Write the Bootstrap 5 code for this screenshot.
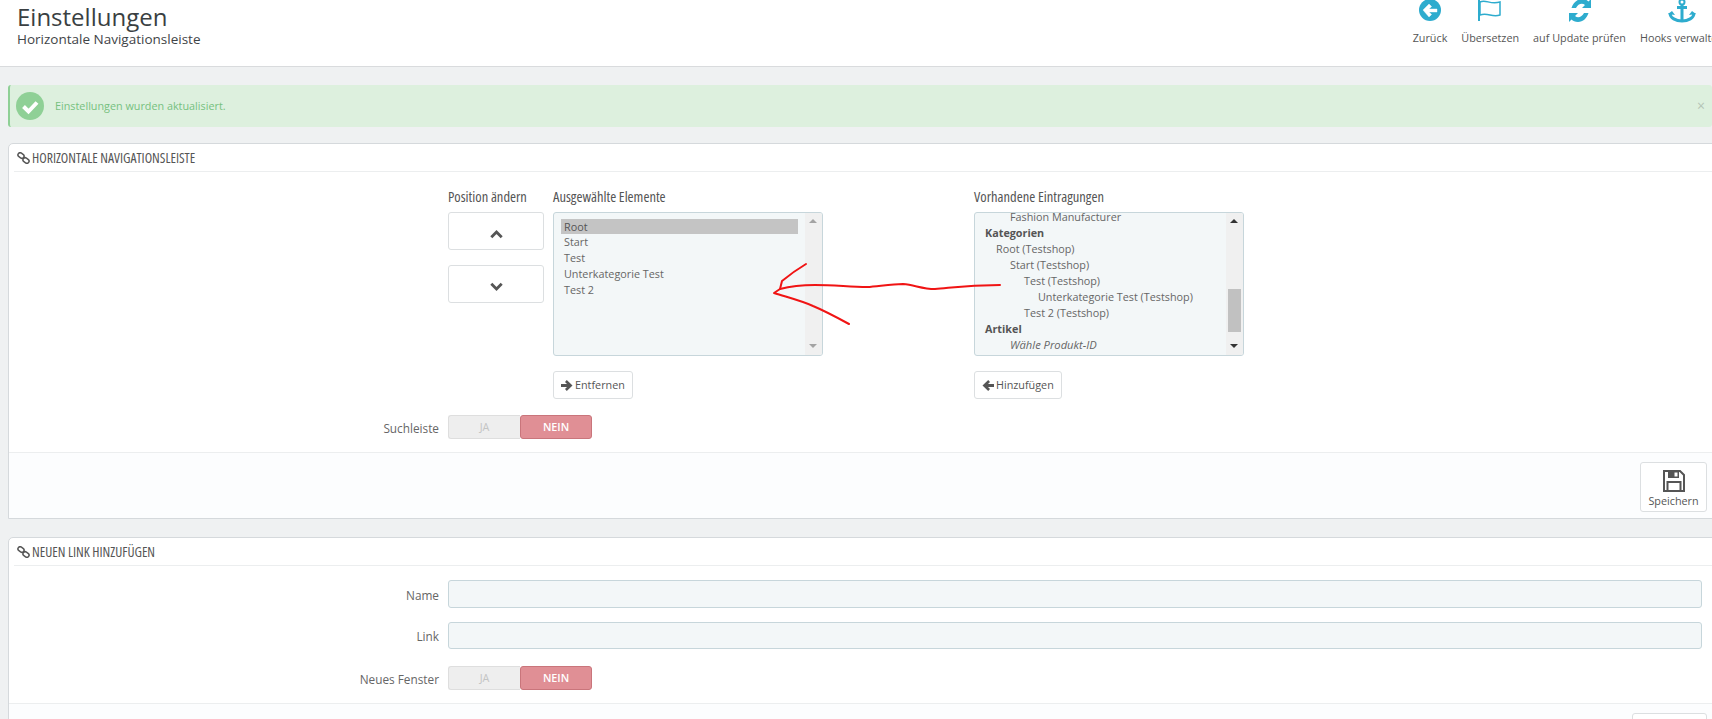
<!DOCTYPE html>
<html lang="de">
<head>
<meta charset="utf-8">
<title>Einstellungen</title>
<link href="https://cdn.jsdelivr.net/npm/bootstrap@5.3.0/dist/css/bootstrap.min.css" rel="stylesheet">
<style>
html,body{height:719px;overflow:hidden}
body{background:#eff1f2;font-family:"Open Sans",sans-serif;font-size:10.8px;color:#666;position:relative}
.pg-head{height:67px;background:#fff;border-bottom:1px solid #d9dbdd;padding-left:17px}
.pg-title{font-size:24px;line-height:26px;color:#3a3f42;padding-top:4px}
.pg-sub{font-size:13.5px;line-height:20px;color:#3f4447;margin-top:-1px}
.tools{margin-right:-12px;gap:14px;font-size:10.8px;color:#555;line-height:15px}
.tool svg{display:block;margin:0 auto;height:23px}
.tool span{display:block;margin-top:7px;white-space:nowrap}
.main-wrap{padding:18px 0 0 8px}
.ok-alert{height:42px;background:#ddf0de;border-left:2px solid #8fd096;border-radius:3px;margin-bottom:16px;color:#76c17f;padding:0 7px 0 6px;gap:11px}
.ok-x{color:#b4c4b6;font-size:14px;line-height:1}
.pn{background:#fff;border:1px solid #d5d9dc;border-radius:5px 5px 0 0;margin-right:-12px;margin-bottom:18px}
.pn-head{height:28px;margin:0 5px;padding-left:3px;border-bottom:1px solid #eceeef;gap:2px;color:#555}
.pn-name{font-size:13.7px;font-stretch:75%;text-transform:uppercase;line-height:1;padding-top:1px}
.cols{padding:18px 0 0 439px;gap:9px}
.col-a{width:96px}
.col-b{width:270px}
.col-c{width:270px;margin-left:142px}
.col-h{height:22px;font-size:14.5px;font-stretch:75%;color:#555;line-height:14px;white-space:nowrap}
.wbtn{display:flex;align-items:center;justify-content:center;background:#fff;border:1px solid #dcdfe1;border-radius:3px;color:#555;padding:0}
.mv{width:96px;height:38px;margin-bottom:15px}
.mv-up{padding-top:6px}
.mv-dn{padding-top:4px}
.lbox{height:144px;background:#f3f7f8;border:1px solid #c7d6db;border-radius:3px;overflow:hidden;line-height:16px;color:#666}
.items{flex:1;padding:6px 7px 0}
.items.scrolled{padding:0;height:142px}
.it{height:16px;padding-left:3px;white-space:nowrap}
.it.sel{background:#c4c4c4;color:#555;height:15px;line-height:16px}
.bar{width:17px;background:#f0f0f0;flex:none;position:relative}
.tri{position:absolute;left:4px;width:0;height:0;border-left:4px solid transparent;border-right:4px solid transparent}
.tri.up{top:6px;border-bottom:4px solid #a3a3a3}
.tri.dn{bottom:7px;border-top:4px solid #a3a3a3}
.tri.up.dk{border-bottom-color:#333}
.tri.dn.dk{border-top-color:#333}
.thumb{position:absolute;top:76px;left:2px;width:13px;height:43px;background:#c1c1c1}
.mv2{height:28px;margin-top:15px;gap:2px;padding:0 7px;font-size:10.8px;display:inline-flex}
.mv2 svg{flex:none}
.form-line{display:flex;align-items:center}
.lab{width:421px;text-align:right;flex:none;color:#666;font-size:11.8px;margin:0;padding-top:3px}
.sw{display:flex;width:144px;height:24px;margin-left:9px;font-size:10.8px}
.sw-y,.sw-n{width:72px;display:flex;align-items:center;justify-content:center}
.sw-y{background:#eee;border:1px solid #dedede;border-right:0;border-radius:3px 0 0 3px;color:#c4c4c4}
.sw-n{background:#e08f95;border:1px solid #c9757b;border-radius:3px;color:#fff;font-weight:600}
.pn-foot{background:#fcfdfe;border-top:1px solid #eceeef;height:66px;padding:9px 16px 0 0;justify-content:flex-end}
.save{width:67px;height:50px;flex-direction:column;justify-content:flex-start;padding-top:7px;font-size:10.8px;line-height:14px;gap:2px}
.wide{width:75px}
.fld{height:28px;flex:1;margin-left:9px;margin-right:21px;background:#f3f7f8;border:1px solid #c7d6db;border-radius:3px}
.fld.lo{height:27px}
.ink{position:absolute;left:0;top:0;pointer-events:none}
.bd{font-weight:700;color:#555}
.em{font-style:italic;font-size:11.2px}
</style>
</head>
<body>
<header class="pg-head d-flex justify-content-between">
  <div>
    <div class="pg-title">Einstellungen</div>
    <div class="pg-sub">Horizontale Navigationsleiste</div>
  </div>
  <div class="tools d-flex">
    <div class="tool text-center">
      <svg width="24" height="23" viewBox="0 0 24 23"><circle cx="12" cy="10" r="11" fill="#2eacce"/><path d="M5 10l6-6 2.600 2.600L11 9h8v3h-8l2.600 2.400L11 17z" fill="#fff" stroke="#fff" stroke-width=".4"/></svg>
      <span>Zurück</span>
    </div>
    <div class="tool text-center">
      <svg width="26" height="23" viewBox="0 0 26 23"><path d="M2 -2V21" stroke="#2eacce" stroke-width="2" fill="none"/><path d="M3 2c6-3 10 3 20 0v13c-8 3-12-3-20 0z" fill="none" stroke="#2eacce" stroke-width="1.500"/></svg>
      <span>Übersetzen</span>
    </div>
    <div class="tool text-center">
      <svg width="24" height="23" viewBox="0 0 24 23"><path d="M3.500 8C5 3 9-1 14-1c3 0 5 1 6.500 2.500L23-1v9h-9l3-3c-3-2.500-7-1-9 3z" fill="#2eacce"/><path d="M20.500 13C19 18 15 22 10 22c-3 0-5-1-6.500-2.500L1 22v-9h9l-3 3c3 2.500 7 1 9-3z" fill="#2eacce"/></svg>
      <span>auf Update prüfen</span>
    </div>
    <div class="tool text-center">
      <svg width="28" height="23" viewBox="0 0 28 23"><circle cx="14" cy="2" r="2.500" fill="none" stroke="#2eacce" stroke-width="2"/><path d="M14 4v17M9 7.500h10" stroke="#2eacce" stroke-width="3" fill="none"/><path d="M2 13c0 5 6 8 12 8s12-3 12-8" stroke="#2eacce" stroke-width="3" fill="none"/><path d="M0 14l4-3 3 4zM28 14l-4-3-3 4z" fill="#2eacce"/></svg>
      <span>Hooks verwalten</span>
    </div>
  </div>
</header>

<main class="main-wrap">
  <div class="ok-alert d-flex align-items-center">
    <svg width="28" height="28" viewBox="0 0 28 28"><circle cx="14" cy="14" r="14" fill="#8fd096"/><path d="M7.500 14.500l5 5 8.500-9" fill="none" stroke="#fff" stroke-width="4"/></svg>
    <span class="flex-grow-1">Einstellungen wurden aktualisiert.</span>
    <span class="ok-x">×</span>
  </div>

  <section class="pn">
    <div class="pn-head d-flex align-items-center">
      <svg width="13" height="12" viewBox="0 0 13 12"><g fill="none" stroke="#555" stroke-width="1.500"><rect x=".8" y="1.300" width="6.400" height="4.400" rx="2.200" transform="rotate(35 4 3.500)"/><rect x="5.800" y="6.300" width="6.400" height="4.400" rx="2.200" transform="rotate(35 9 8.500)"/></g></svg>
      <span class="pn-name">Horizontale Navigationsleiste</span>
    </div>
    <div class="cols d-flex">
      <div class="col-a">
        <div class="col-h">Position ändern</div>
        <button class="wbtn mv mv-up" type="button" aria-label="hoch"><svg width="13" height="9" viewBox="0 0 13 9"><path d="M1.300 7.300L6.500 2l5.200 5.300" fill="none" stroke="#555" stroke-width="2.800"/></svg></button>
        <button class="wbtn mv mv-dn" type="button" aria-label="runter"><svg width="13" height="9" viewBox="0 0 13 9"><path d="M1.300 1.700L6.500 7l5.200-5.300" fill="none" stroke="#555" stroke-width="2.800"/></svg></button>
      </div>
      <div class="col-b">
        <div class="col-h">Ausgewählte Elemente</div>
        <div class="lbox d-flex">
          <div class="items">
            <div class="it sel">Root</div>
            <div class="it">Start</div>
            <div class="it">Test</div>
            <div class="it">Unterkategorie Test</div>
            <div class="it">Test 2</div>
          </div>
          <div class="bar"><i class="tri up"></i><i class="tri dn"></i></div>
        </div>
        <button class="wbtn mv2" type="button"><svg width="12" height="11" viewBox="0 0 12 11"><path d="M0 4h6L4 2l1.800-2L11.500 5.500 5.800 11 4 9l2-2H0z" fill="#555"/></svg>Entfernen</button>
      </div>
      <div class="col-c">
        <div class="col-h">Vorhandene Eintragungen</div>
        <div class="lbox d-flex">
          <div class="items scrolled overflow-hidden">
            <div class="it" style="padding-left:35px;margin-top:-4px">Fashion Manufacturer</div>
            <div class="it bd" style="padding-left:10px">Kategorien</div>
            <div class="it" style="padding-left:21px">Root (Testshop)</div>
            <div class="it" style="padding-left:35px">Start (Testshop)</div>
            <div class="it" style="padding-left:49px">Test (Testshop)</div>
            <div class="it" style="padding-left:63px">Unterkategorie Test (Testshop)</div>
            <div class="it" style="padding-left:49px">Test 2 (Testshop)</div>
            <div class="it bd" style="padding-left:10px">Artikel</div>
            <div class="it em" style="padding-left:35px">Wähle Produkt-ID</div>
          </div>
          <div class="bar"><i class="tri up dk"></i><i class="thumb"></i><i class="tri dn dk"></i></div>
        </div>
        <button class="wbtn mv2" type="button"><svg width="12" height="11" viewBox="0 0 12 11"><path d="M12 4H6l2-2L6.200 0 .5 5.500 6.200 11 8 9 6 7h6z" fill="#555"/></svg>Hinzufügen</button>
      </div>
    </div>
    <div class="form-line" style="margin:16px 0 13px 9px">
      <div class="lab">Suchleiste</div>
      <div class="sw"><span class="sw-y">JA</span><span class="sw-n">NEIN</span></div>
    </div>
    <div class="pn-foot d-flex">
      <button class="wbtn save" type="button">
        <svg width="22" height="22" viewBox="0 0 22 22"><path d="M1 1h16l4 4v16H1z" fill="none" stroke="#555" stroke-width="2"/><path d="M5 1h11v7H5z" fill="#555"/><path d="M11.500 2.500h3v4h-3z" fill="#fff"/><path d="M4.500 12h13v9h-13z" fill="none" stroke="#555" stroke-width="2"/></svg>
        Speichern
      </button>
    </div>
  </section>

  <section class="pn">
    <div class="pn-head d-flex align-items-center">
      <svg width="13" height="12" viewBox="0 0 13 12"><g fill="none" stroke="#555" stroke-width="1.500"><rect x=".8" y="1.300" width="6.400" height="4.400" rx="2.200" transform="rotate(35 4 3.500)"/><rect x="5.800" y="6.300" width="6.400" height="4.400" rx="2.200" transform="rotate(35 9 8.500)"/></g></svg>
      <span class="pn-name">Neuen Link hinzufügen</span>
    </div>
    <div class="form-line" style="margin:14px 0 0 9px">
      <label class="lab" for="f1">Name</label>
      <input class="fld" id="f1" type="text">
    </div>
    <div class="form-line" style="margin:14px 0 0 9px">
      <label class="lab" for="f2">Link</label>
      <input class="fld lo" id="f2" type="text">
    </div>
    <div class="form-line" style="margin:17px 0 13px 9px">
      <div class="lab">Neues Fenster</div>
      <div class="sw"><span class="sw-y">JA</span><span class="sw-n">NEIN</span></div>
    </div>
    <div class="pn-foot d-flex">
      <button class="wbtn save wide" type="button" aria-label="Speichern"></button>
    </div>
  </section>
</main>

<svg class="ink" width="1712" height="719" viewBox="0 0 1712 719" fill="none" stroke="#f01414" stroke-width="2" stroke-linejoin="round" stroke-linecap="round">
  <path d="M806 264C796 270 788 276 782 281L780 289L774 293C790 298 802 301 813 306C825 311 838 318 849 324"/>
  <path d="M780 289C795 285 805 285 815 285C835 285 850 287 867 287C880 286 892 284 903 284C915 285 922 289 935 289C950 288 965 285 1000 285"/>
</svg>
</body>
</html>
